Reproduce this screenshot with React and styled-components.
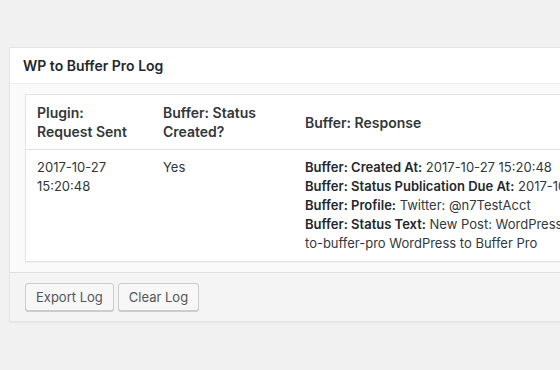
import styled, { createGlobalStyle } from 'styled-components'

const GlobalStyle = createGlobalStyle`
  html, body {
    margin: 0;
    padding: 0;
    background: #f1f1f1;
    overflow: hidden;
  }
  body {
    font-family: Inter, "Liberation Sans", Arial, sans-serif;
    font-size: 13px;
    color: #32373c;
  }
`

const Page = styled.div`
  padding: 47px 0 0 9px;
  height: 370px;
  box-sizing: border-box;
`

const Postbox = styled.div`
  width: 720px;
  border: 1px solid #e5e5e5;
  box-shadow: 0 1px 1px rgba(0, 0, 0, 0.04);
  background: #fafafa;
`

const Header = styled.h2`
  margin: 0;
  height: 35px;
  display: flex;
  align-items: center;
  padding: 0 13px;
  background: #fff;
  border-bottom: 1px solid #eee;
  font-size: 14px;
  font-weight: 600;
  color: #23282d;
`

const Inside = styled.div`
  padding: 10px 15px;
`

const LogTable = styled.table`
  width: 100%;
  border-collapse: separate;
  border-spacing: 0;
  table-layout: fixed;
  background: #fff;
  border: 1px solid #e5e5e5;
  box-shadow: 0 1px 1px rgba(0, 0, 0, 0.04);
`

const HeadCell = styled.th`
  box-sizing: border-box;
  text-align: left;
  vertical-align: middle;
  padding: 8px 11px;
  font-size: 14px;
  line-height: 19px;
  font-weight: 600;
  color: #32373c;
  border-bottom: 1px solid #e1e1e1;
  width: ${p => p.$width || 'auto'};
`

const Cell = styled.td`
  vertical-align: top;
  padding: 8px 11px;
  font-size: 13px;
  line-height: 19px;
  color: #32373c;
`

const Line = styled.div`
  white-space: nowrap;

  strong {
    color: #23282d;
    font-weight: 600;
  }
`

const Footer = styled.div`
  display: flex;
  gap: 4px;
  padding: 10px 15px;
  border-top: 1px solid #ddd;
  background: #f4f4f4;
`

const Button = styled.button`
  height: 28px;
  padding: 0 10px 1px;
  font-family: inherit;
  font-size: 13px;
  line-height: 26px;
  color: #555;
  background: #f7f7f7;
  border: 1px solid #ccc;
  border-radius: 3px;
  box-shadow: 0 1px 0 #ccc;
  cursor: pointer;
`

const response = [
  ['Buffer: Created At:', ' 2017-10-27 15:20:48'],
  ['Buffer: Status Publication Due At:', ' 2017-10-27 15:20:48'],
  ['Buffer: Profile:', ' Twitter: @n7TestAcct'],
  ['Buffer: Status Text:', ' New Post: WordPress-'],
  [null, 'to-buffer-pro WordPress to Buffer Pro'],
]

export default function App() {
  return (
    <>
      <GlobalStyle />
      <Page>
        <Postbox>
          <Header>WP to Buffer Pro Log</Header>
          <Inside>
            <LogTable>
              <thead>
                <tr>
                  <HeadCell $width="126px">Plugin: Request Sent</HeadCell>
                  <HeadCell $width="142px">Buffer: Status Created?</HeadCell>
                  <HeadCell>Buffer: Response</HeadCell>
                </tr>
              </thead>
              <tbody>
                <tr>
                  <Cell>2017-10-27 15:20:48</Cell>
                  <Cell>Yes</Cell>
                  <Cell>
                    {response.map(([label, value], i) => (
                      <Line key={i}>
                        {label && <strong>{label}</strong>}
                        {value}
                      </Line>
                    ))}
                  </Cell>
                </tr>
              </tbody>
            </LogTable>
          </Inside>
          <Footer>
            <Button>Export Log</Button>
            <Button>Clear Log</Button>
          </Footer>
        </Postbox>
      </Page>
    </>
  )
}
